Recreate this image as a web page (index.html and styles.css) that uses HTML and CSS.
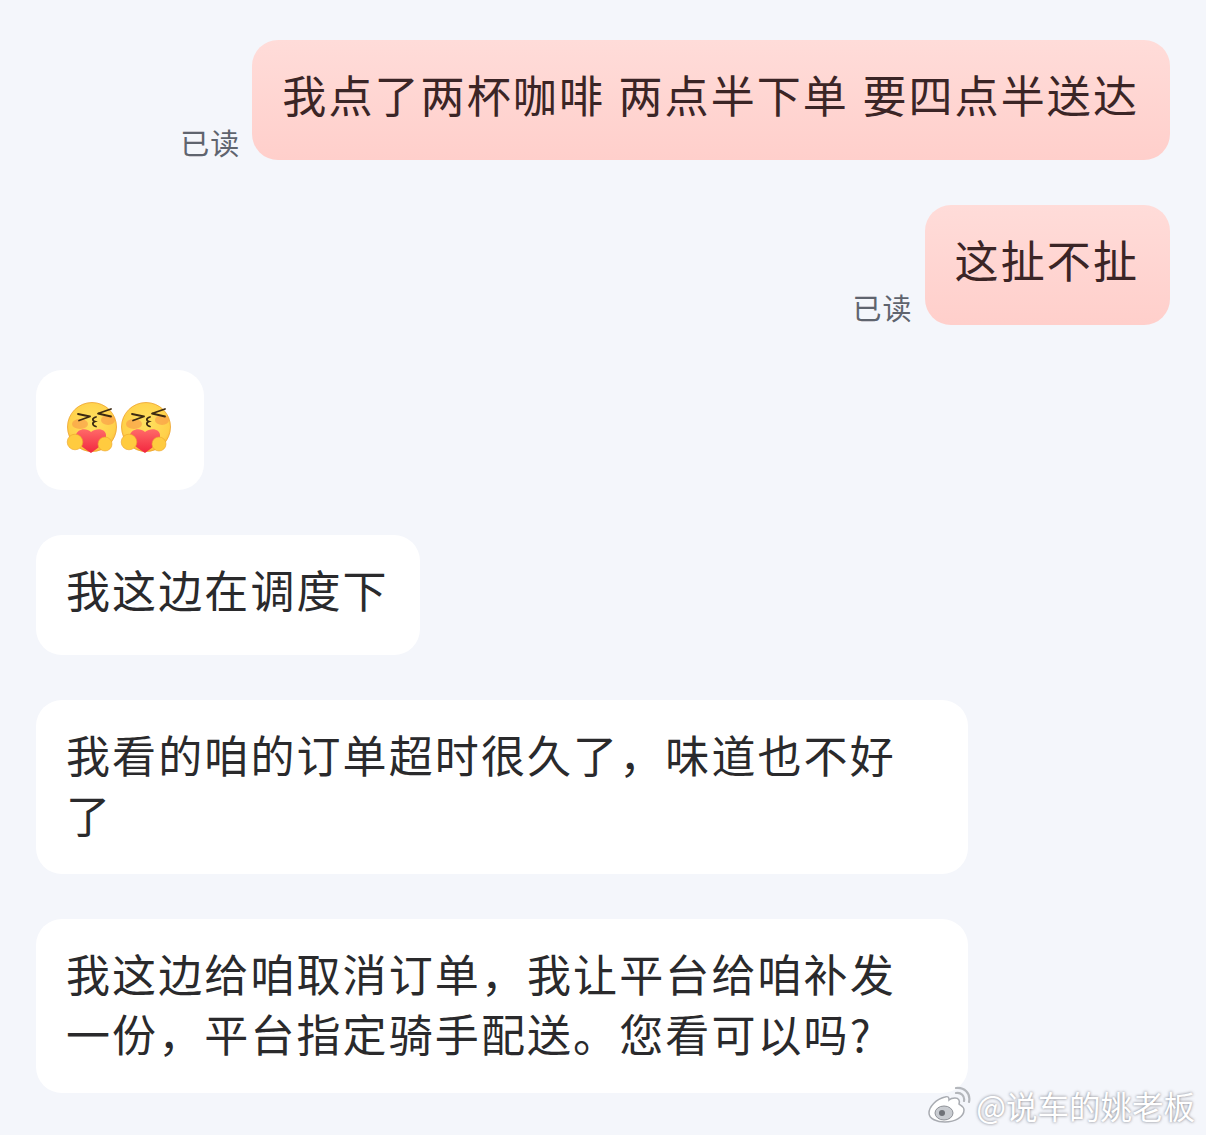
FILE: index.html

```html
<!DOCTYPE html>
<html lang="zh-CN">
<head>
  <meta charset="UTF-8" />
  <title>聊天记录</title>
  <link rel="stylesheet" href="styles.css">
</head>
<body>
  <svg class="defs" width="0" height="0">
    <defs>
      <radialGradient id="faceFill" cx="0.5" cy="0.4" r="0.65">
        <stop offset="0" stop-color="#ffe15f"/>
        <stop offset="0.75" stop-color="#ffd04a"/>
        <stop offset="1" stop-color="#f7ae33"/>
      </radialGradient>
      <linearGradient id="heartFill" x1="0" y1="0" x2="0" y2="1">
        <stop offset="0" stop-color="#ff6a68"/>
        <stop offset="1" stop-color="#f2263f"/>
      </linearGradient>
      <symbol id="hugFace" viewBox="0 0 54 52">
        <circle cx="26" cy="25" r="24.500" fill="url(#faceFill)" stroke="#eda22c" stroke-width="0.800"/>
        <ellipse cx="14" cy="22" rx="8" ry="5" fill="#f78a45" opacity="0.5"/>
        <ellipse cx="42" cy="18" rx="7" ry="5" fill="#f78a45" opacity="0.5"/>
        <path d="M12 12l12 2.500-11 4" fill="none" stroke="#3d2a12" stroke-width="1.800" stroke-linecap="round" stroke-linejoin="round"/>
        <path d="M45 7l-13 4.500 13 3" fill="none" stroke="#3d2a12" stroke-width="1.800" stroke-linecap="round" stroke-linejoin="round"/>
        <path d="M30 15c-4 1-4 3.500-1 4.500-3 1-3 4 1 5" fill="none" stroke="#3d2a12" stroke-width="1.800" stroke-linecap="round"/>
        <path d="M25 51C17 46 9 40 10 33c1-6 10-8 15-3 6-5 15-3 15 3 1 7-8 13-15 18z" fill="url(#heartFill)"/>
        <circle cx="9" cy="40" r="7.800" fill="#ffcb3f" stroke="#eda22c" stroke-width="0.600"/>
        <circle cx="39" cy="42" r="7" fill="#ffcb3f" stroke="#eda22c" stroke-width="0.600"/>
      </symbol>
    </defs>
  </svg>

  <div class="chat">
    <div class="row mine">
      <span class="read">已读</span>
      <div class="bubble pink">我点了两杯咖啡 两点半下单 要四点半送达</div>
    </div>
    <div class="row mine">
      <span class="read">已读</span>
      <div class="bubble pink">这扯不扯</div>
    </div>
    <div class="row">
      <div class="bubble emoji">
        <svg class="face" width="54" height="52"><use href="#hugFace"/></svg>
        <svg class="face" width="54" height="52"><use href="#hugFace"/></svg>
      </div>
    </div>
    <div class="row">
      <div class="bubble">我这边在调度下</div>
    </div>
    <div class="row">
      <div class="bubble wide">我看的咱的订单超时很久了，味道也不好了</div>
    </div>
    <div class="row">
      <div class="bubble wide">我这边给咱取消订单，我让平台给咱补发一份，平台指定骑手配送。您看可以吗?</div>
    </div>
  </div>

  <div class="watermark">
    <svg class="weibo" width="44" height="38" viewBox="0 0 44 38">
      <path d="M18 11C9 13 2 21 2 27c0 6 8 9 16 9 10 0 19-5 19-12 0-4-4-5-5-6 1-3 0-6-4-6-3 0-5 1-6 2 0-3-1-4-4-3z" fill="#fff" stroke="#a9acb2" stroke-width="1.500"/>
      <ellipse cx="17" cy="27" rx="9" ry="7" fill="#c9ccd1" stroke="#8f9298"/>
      <circle cx="15" cy="27" r="3" fill="#6f7278"/>
      <path d="M29 7c5-1 9 3 8 8M29 2c8-1 15 5 13 14" fill="none" stroke="#b4b7bc" stroke-width="2.200" stroke-linecap="round"/>
    </svg>
    <span>@说车的姚老板</span>
  </div>
</body>
</html>
```

FILE: styles.css

```css
* {
  box-sizing: border-box;
}
html, body {
  height: 100%;
}
body {
  margin: 0;
  background: #f4f6fb;
  font-family: "Noto Sans CJK SC", "Noto Sans", sans-serif;
  position: relative;
  overflow: hidden;
}
.defs {
  position: absolute;
}
.chat {
  display: flex;
  flex-direction: column;
  gap: 45px;
  padding: 40px 36px 0;
}
.row {
  display: flex;
  align-items: flex-end;
}
.row.mine {
  justify-content: flex-end;
  gap: 12px;
}
.read {
  font-size: 29px;
  line-height: 36px;
  letter-spacing: 1px;
  color: #5f646e;
}
.bubble {
  min-height: 120px;
  padding: 21px 31px 33px 30px;
  display: flex;
  align-items: center;
  border-radius: 26px;
  background: #fff;
  color: #2a2a2c;
  font-size: 44px;
  line-height: 60px;
  letter-spacing: 2.100px;
  word-spacing: 1.500px;
}
.bubble.pink {
  background: linear-gradient(to bottom, #ffdcd9, #ffcfcb);
  color: #3b2526;
}
.bubble.wide {
  width: 932px;
  padding-top: 24px;
  padding-bottom: 30px;
}
.bubble.emoji {
  width: 168px;
  padding: 0 0 4px 30px;
}
.face {
  flex: none;
}
.watermark {
  position: absolute;
  right: 11px;
  bottom: 10px;
  display: flex;
  align-items: center;
  gap: 5px;
  font-size: 31.500px;
  line-height: 40px;
  color: #fff;
  text-shadow: 0 0 3px rgba(70, 70, 80, 0.75);
}
```
